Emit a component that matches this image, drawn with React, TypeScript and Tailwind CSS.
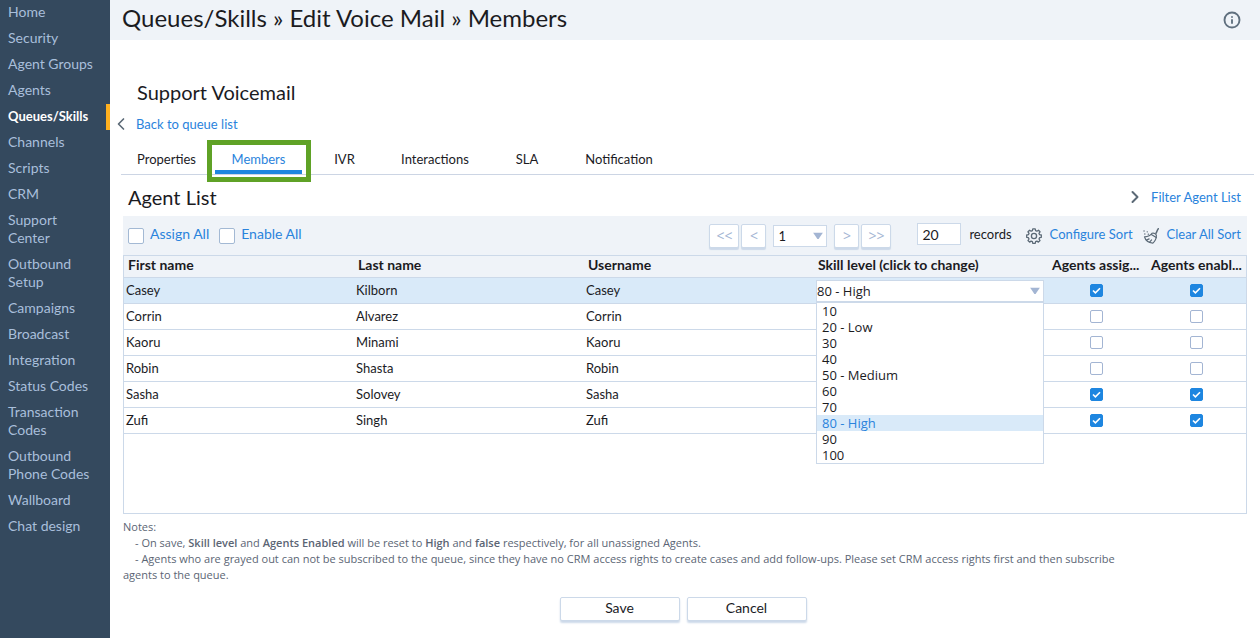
import { useState } from 'react';
import clsx from 'clsx';
import { ChevronLeft, ChevronRight, Info } from 'lucide-react';

const menu = [
  'Home', 'Security', 'Agent Groups', 'Agents', 'Queues/Skills', 'Channels', 'Scripts', 'CRM',
  'Support Center', 'Outbound Setup', 'Campaigns', 'Broadcast', 'Integration', 'Status Codes',
  'Transaction Codes', 'Outbound Phone Codes', 'Wallboard', 'Chat design',
];

const tabs = [
  { label: 'Properties', width: 'w-[94px] pr-[3px]' },
  { label: 'Members', width: 'w-[87px]' },
  { label: 'IVR', width: 'w-[87px] pr-0.5' },
  { label: 'Interactions', width: 'w-[92px]' },
  { label: 'SLA', width: 'w-[92px]' },
  { label: 'Notification', width: 'w-[92px]' },
];

const agents = [
  { first: 'Casey', last: 'Kilborn', on: true },
  { first: 'Corrin', last: 'Alvarez', on: false },
  { first: 'Kaoru', last: 'Minami', on: false },
  { first: 'Robin', last: 'Shasta', on: false },
  { first: 'Sasha', last: 'Solovey', on: true },
  { first: 'Zufi', last: 'Singh', on: true },
];

const levels = ['10', '20 - Low', '30', '40', '50 - Medium', '60', '70', '80 - High', '90', '100'];

function Sidebar() {
  return (
    <nav className="w-[110px] shrink-0 bg-[#34495e] text-sm leading-[18px] text-[#a9bfdb]">
      {menu.map((item) => (
        <a
          key={item}
          href="#"
          className={clsx(
            'block pb-[5px] pl-2 pr-4 pt-[3px]',
            item === 'Queues/Skills' && 'border-r-4 border-[#ffb01f] pr-0 text-[13px] font-bold leading-[18px] text-white',
          )}
        >
          {item}
        </a>
      ))}
    </nav>
  );
}

function Arrow() {
  return (
    <svg viewBox="0 0 10 7" className="pointer-events-none absolute right-1 top-1/2 h-[7px] w-[10px] -translate-y-1/2 fill-[#a3b5d3]">
      <path d="M0 0h10L5.6 6.5H4.4z" />
    </svg>
  );
}

function GearIcon() {
  return (
    <svg viewBox="0 0 16 16" className="size-4 fill-none stroke-[#5b6976]" strokeWidth="1.3" strokeLinejoin="round">
      <path d="M6.8.8h2.4l.4 1.8 1.3.6 1.6-1 1.5 1.6-1 1.6.6 1.3 1.7.3v2.3l-1.7.4-.6 1.3 1 1.5-1.6 1.6-1.5-1-1.3.6-.4 1.7H6.8l-.4-1.7-1.3-.6-1.5 1L2 12.5l1-1.5-.6-1.3-1.7-.4V7l1.7-.3L3 5.4 2 3.8l1.6-1.6 1.5 1 1.3-.6z" />
      <circle cx="8" cy="8" r="2.6" />
    </svg>
  );
}

function BroomIcon() {
  return (
    <svg viewBox="0 0 16 16" className="size-4 fill-none stroke-[#5b6976]" strokeWidth="1.2" strokeLinecap="round" strokeLinejoin="round">
      <path d="M15.3.7c-1.2 1.3-1 2.7-2.3 4.5" strokeWidth="1.5" />
      <path d="M9 5.3C7.6 7.6 5 8.6 1.5 8.8c.9 3.3 4 5.9 8.4 6.3 2-1.8 3.4-4.3 3.5-7.6C13.2 5.8 10.700 4.500 9 5.300z" />
      <path d="M8.300 6.600l5 3M3.500 12.100l2.600-1.200M6.600 14.200l2-2.300" />
      <path d="M1 3h.1M4.200 3.800h.1M1.800 6h.1M5.300 6.200h.1" strokeWidth="1.300" />
    </svg>
  );
}

function PageButton({ label, name, className }: { label: string; name: string; className: string }) {
  return (
    <button
      aria-label={name}
      className={clsx(
        "h-6 rounded-[2px] border border-[#ccd9e9] bg-white font-['Open_Sans',sans-serif] text-sm leading-5 text-[#a3b5d3] shadow-[0_2px_1px_#ccd9e9]",
        className,
      )}
    >
      {label}
    </button>
  );
}

function BigCheck({ label }: { label: string }) {
  return (
    <label className="flex items-center gap-1.5 text-sm leading-[18px] text-[#2a83dc]">
      <input type="checkbox" className="size-4 appearance-none rounded-[2px] border border-[#a3b9d4] bg-white checked:bg-[#1e86e0]" />
      <span className="pb-[3px]">{label}</span>
    </label>
  );
}

function RowCheck({ initial, name }: { initial: boolean; name: string }) {
  const [checked, setChecked] = useState(initial);
  return (
    <span className="relative mx-auto block size-[13px]">
      <input
        type="checkbox"
        aria-label={name}
        checked={checked}
        onChange={() => setChecked(!checked)}
        className="block size-[13px] appearance-none rounded-[2px] border border-[#a3b5d3] bg-white checked:border-[#1e86e0] checked:bg-[#1e86e0]"
      />
      {checked && (
        <svg viewBox="0 0 13 13" className="pointer-events-none absolute inset-0 fill-none stroke-white" strokeWidth="1.6">
          <path d="M3 6.5l2.400 2.400L10 4.200" />
        </svg>
      )}
    </span>
  );
}

function SkillSelect() {
  const [level, setLevel] = useState('80 - High');
  return (
    <div className="relative -ml-px mr-0.5 font-['Open_Sans',sans-serif] text-[13px]">
      <select
        aria-label="Skill level"
        value={level}
        onChange={(e) => setLevel(e.target.value)}
        className="block h-[22px] w-full appearance-none border border-[#ccd9e9] bg-white leading-5"
      >
        {levels.map((l) => <option key={l}>{l}</option>)}
      </select>
      <Arrow />
      <ul className="absolute inset-x-0 top-full z-10 border border-[#ccd9e9] bg-white leading-4">
        {levels.map((l) => (
          <li
            key={l}
            onClick={() => setLevel(l)}
            className={clsx('pl-[5px]', l === level && 'bg-[#d9eaf9] text-[#2a83dc]')}
          >
            {l}
          </li>
        ))}
      </ul>
    </div>
  );
}

export default function App() {
  return (
    <div className="flex min-h-screen bg-white font-['Lato',sans-serif] text-[13px] leading-5 text-[#1b1b1f]">
      <Sidebar />
      <div className="min-w-0 flex-1">
        <header className="flex h-10 items-center justify-between bg-[#eff3f8] pl-3 pr-[19px]">
          <h1 className="pb-[5px] text-2xl">Queues/Skills » Edit Voice Mail » Members</h1>
          <button aria-label="Information">
            <Info className="size-[18px] text-[#5f6f7e]" strokeWidth={2.5} />
          </button>
        </header>

        <main className="pb-4 pl-[11px] pr-1.5">
          <h2 className="mt-[39px] pl-4 text-xl leading-[26px]">Support Voicemail</h2>
          <a href="#" className="-ml-[10px] mt-[9px] flex w-max items-center gap-[5px] leading-5 text-[#2a83dc]">
            <ChevronLeft className="size-5 text-[#5b6976]" strokeWidth={2} />
            Back to queue list
          </a>

          <div className="mt-[10px] flex h-[31px] border-b border-[#ccd5e4]">
            {tabs.map((tab) => (
              <button
                key={tab.label}
                className={clsx(
                  'relative',
                  tab.width,
                  tab.label === 'Members' && 'text-[#2a83dc]',
                )}
              >
                {tab.label}
                {tab.label === 'Members' && (
                  <>
                    <span className="absolute inset-x-0 bottom-0 h-1 bg-[#1e86e0]" />
                    <span className="absolute -bottom-2 -left-2 -right-[9px] -top-1 border-[5px] border-[#5fa226]" />
                  </>
                )}
              </button>
            ))}
          </div>

          <section className="ml-0.5 mr-[7px]">
            <div className="flex h-[41px] items-center justify-between pl-[5px] pr-1.5 pt-0.5">
              <h3 className="text-xl">Agent List</h3>
              <a href="#" className="flex items-center gap-1.5 text-[#2a83dc]">
                <ChevronRight className="size-5 text-[#5b6976]" strokeWidth={2.4} />
                Filter Agent List
              </a>
            </div>

            <div className="flex h-[39px] items-center gap-2.5 bg-[#eff3f8] pl-[5px] pr-1.5">
              <BigCheck label="Assign All" />
              <BigCheck label="Enable All" />
              <div className="ml-auto flex items-center gap-0.5">
                <PageButton label="<<" name="First page" className="w-[30px]" />
                <PageButton label="<" name="Previous page" className="w-[25px]" />
                <div className="relative mx-[5px]">
                  <select aria-label="Page" className="block h-[22px] w-[54px] appearance-none border border-[#ccd9e9] bg-white pl-1 leading-5">
                    <option>1</option>
                  </select>
                  <Arrow />
                </div>
                <PageButton label=">" name="Next page" className="w-[25px]" />
                <PageButton label=">>" name="Last page" className="w-[30px]" />
              </div>
              <label className="ml-4 flex items-center gap-2 pb-[3px]">
                <input defaultValue="20" className="h-[22px] w-11 border border-[#ccd9e9] bg-white px-1 text-sm" />
                records
              </label>
              <button className="ml-1 flex items-center gap-2 text-[#2a83dc]">
                <GearIcon />
                <span className="pb-[3px]">Configure Sort</span>
              </button>
              <button className="flex items-center gap-2 text-[#2a83dc]">
                <BroomIcon />
                <span className="pb-[3px]">Clear All Sort</span>
              </button>
            </div>

            <div className="min-h-[259px] border border-[#ccd9e9]">
              <table className="w-full table-fixed border-collapse text-left">
                <colgroup>
                  <col className="w-[20.5%]" />
                  <col className="w-[20.5%]" />
                  <col className="w-[20.5%]" />
                  <col />
                  <col className="w-[100px]" />
                  <col className="w-[100px]" />
                </colgroup>
                <thead>
                  <tr className="h-[21px] border-b border-[#ccd9e9] bg-[#eff3f8] text-sm leading-[18px]">
                    <th className="pb-[3px] pl-1 font-bold">First name</th>
                    <th className="pb-[3px] pl-1 font-bold">Last name</th>
                    <th className="pb-[3px] pl-1 font-bold">Username</th>
                    <th className="pb-[3px] pl-1 font-bold">Skill level (click to change)</th>
                    <th className="whitespace-nowrap pb-[3px] pl-1.5 font-bold">Agents assig...</th>
                    <th className="whitespace-nowrap pb-[3px] pl-[5px] font-bold">Agents enabl...</th>
                  </tr>
                </thead>
                <tbody>
                  {agents.map((agent, i) => (
                    <tr key={agent.first} className={clsx('h-[26px] border-b border-[#ccd9e9]', i === 0 && 'bg-[#d9eaf9]')}>
                      <td className="pb-0.5 pl-0.5">{agent.first}</td>
                      <td className="pb-0.5 pl-0.5">{agent.last}</td>
                      <td className="pb-0.5 pl-0.5">{agent.first}</td>
                      <td className="pl-[3px]">{i === 0 && <SkillSelect />}</td>
                      <td><RowCheck initial={agent.on} name={`${agent.first} assigned`} /></td>
                      <td><RowCheck initial={agent.on} name={`${agent.first} enabled`} /></td>
                    </tr>
                  ))}
                </tbody>
              </table>
            </div>

            <div className="mt-[5px] max-w-[1010px] font-['Open_Sans',sans-serif] text-[11px] leading-4 text-[#5b6574]">
              <p className="font-medium">Notes:</p>
              <p className="indent-3">
                - On save, <b className="font-semibold">Skill level</b> and <b className="font-semibold">Agents Enabled</b> will
                be reset to <b className="font-semibold">High</b> and <b className="font-semibold">false</b> respectively, for
                all unassigned Agents.
              </p>
              <p className="indent-3">
                - Agents who are grayed out can not be subscribed to the queue, since they have no CRM access rights to
                create cases and add follow-ups. Please set CRM access rights first and then subscribe agents to the queue.
              </p>
            </div>

            <div className="mt-3.5 flex justify-center gap-[7px] pr-1 text-sm leading-5">
              <button className="h-6 w-[120px] rounded-[2px] border border-[#ccd9e9] bg-white pb-0.5 shadow-[0_2px_2px_#ccd9e9]">Save</button>
              <button className="h-6 w-[120px] rounded-[2px] border border-[#ccd9e9] bg-white pb-0.5 shadow-[0_2px_2px_#ccd9e9]">Cancel</button>
            </div>
          </section>
        </main>
      </div>
    </div>
  );
}
